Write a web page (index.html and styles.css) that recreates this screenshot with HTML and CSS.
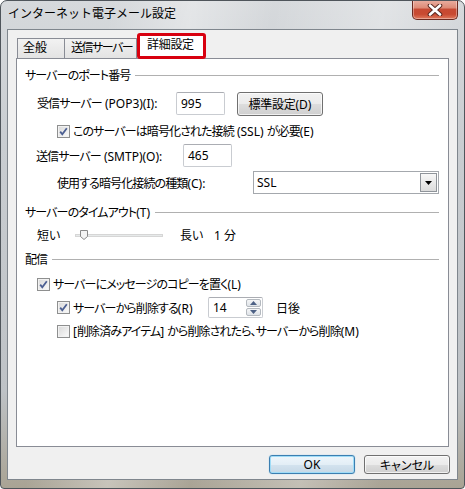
FILE: index.html
```html
<!DOCTYPE html>
<html lang="ja">
<head>
<meta charset="utf-8">
<title>インターネット電子メール設定</title>
<link rel="stylesheet" href="styles.css">
</head>
<body>
<div class="window">
  <div class="titlebar">
    <span class="title">インターネット電子メール設定</span>
    <div class="close">
      <svg width="16" height="12" viewBox="0 0 16 12"><path d="M3 1.5 L13 10.5 M13 1.5 L3 10.5" stroke="#5b2a22" stroke-width="4.6" stroke-linecap="round"/><path d="M3 1.5 L13 10.5 M13 1.5 L3 10.5" stroke="#ffffff" stroke-width="2.6" stroke-linecap="round"/></svg>
    </div>
  </div>
  <div class="client">
    <div class="tabs">
      <div class="tab tab-general">全般</div>
      <div class="tab tab-send">送信サーバー</div>
      <div class="tab tab-active">詳細設定</div>
    </div>
    <div class="panel">
      <div class="group-head head-port"><span>サーバーのポート番号</span><i class="rule"></i></div>
      <div class="row row-pop">
        <span class="lbl lbl-pop">受信サーバー<span class="lat"> (POP3)(I):</span></span>
        <span class="field field-pop">995</span>
        <span class="btn btn-std">標準設定<span class="lat">(D)</span></span>
      </div>
      <div class="row row-ssl">
        <span class="cb"><svg width="11" height="11" viewBox="0 0 11 11"><path d="M2.2 5.6 L4.3 8.3 L8.8 2.2" stroke="#4c5f92" stroke-width="1.8" fill="none"/></svg></span>
        <span class="cb-text">このサーバーは暗号化された接続<span class="lat"> (SSL) </span>が必要<span class="lat">(E)</span></span>
      </div>
      <div class="row row-smtp">
        <span class="lbl lbl-smtp">送信サーバー<span class="lat"> (SMTP)(O):</span></span>
        <span class="field field-smtp">465</span>
      </div>
      <div class="row row-enc">
        <span class="lbl lbl-enc">使用する暗号化接続の種類<span class="lat">(C):</span></span>
        <span class="combo"><span class="combo-val">SSL</span><span class="combo-btn"><svg width="7" height="4" viewBox="0 0 7 4"><path d="M0 0 H7 L3.5 4 Z" fill="#000"/></svg></span></span>
      </div>
      <div class="group-head head-timeout"><span>サーバーのタイムアウト<span class="lat">(T)</span></span><i class="rule"></i></div>
      <div class="row row-slider">
        <span class="s-short">短い</span>
        <span class="track"><svg class="thumb" width="8" height="10" viewBox="0 0 8 10"><path d="M0.5 0.5 H7.5 V6.5 L4 9.5 L0.5 6.5 Z" fill="#f4f4f4" stroke="#8a8a8a"/></svg></span>
        <span class="s-long">長い</span>
        <span class="s-val">1 分</span>
      </div>
      <div class="group-head head-deliver"><span>配信</span><i class="rule"></i></div>
      <div class="row row-copy">
        <span class="cb"><svg width="11" height="11" viewBox="0 0 11 11"><path d="M2.2 5.6 L4.3 8.3 L8.8 2.2" stroke="#4c5f92" stroke-width="1.8" fill="none"/></svg></span>
        <span class="cb-text">サーバーにメッセージのコピーを置く<span class="lat">(L)</span></span>
      </div>
      <div class="row row-del">
        <span class="cb"><svg width="11" height="11" viewBox="0 0 11 11"><path d="M2.2 5.6 L4.3 8.3 L8.8 2.2" stroke="#4c5f92" stroke-width="1.8" fill="none"/></svg></span>
        <span class="cb-text del-text">サーバーから削除する<span class="lat">(R)</span></span>
        <span class="spin"><span class="spin-val">14</span><span class="spin-btns"><span class="spin-b"><svg width="7" height="4" viewBox="0 0 7 4"><path d="M0 4 H7 L3.5 0 Z" fill="#4d6185"/></svg></span><span class="spin-b"><svg width="7" height="4" viewBox="0 0 7 4"><path d="M0 0 H7 L3.5 4 Z" fill="#4d6185"/></svg></span></span></span>
        <span class="days">日後</span>
      </div>
      <div class="row row-deleted">
        <span class="cb"></span>
        <span class="cb-text"><span class="lat">[</span>削除済みアイテム<span class="lat">] </span>から削除されたら、サーバーから削除<span class="lat">(M)</span></span>
      </div>
    </div>
    <div class="buttons">
      <span class="btn btn-ok">OK</span>
      <span class="btn btn-cancel">キャンセル</span>
    </div>
  </div>
</div>
</body>
</html>
```

FILE: styles.css
```css
* { box-sizing: border-box; }
body {
  margin: 0;
  font-family: "Noto Sans", "Noto Sans CJK JP", sans-serif;
  font-size: 12px;
  color: #000;
  font-feature-settings: "palt";
  letter-spacing: -0.9px;
}
.lat { letter-spacing: 0; white-space: pre; }
.window {
  width: 465px;
  height: 489px;
  border: 1px solid #4f555b;
  border-radius: 7px 7px 4px 4px;
  background:
    linear-gradient(100deg, rgba(255,255,255,0) 20%, rgba(255,255,255,0.35) 35%, rgba(255,255,255,0) 50%, rgba(255,255,255,0.3) 70%, rgba(255,255,255,0) 85%),
    linear-gradient(#d6d9dc, #c9cdd1 30%, #bec2c6 80%, #a9a394);
  padding: 0 6px 8px 6px;
  display: flex;
  flex-direction: column;
  overflow: hidden;
}
.titlebar {
  height: 28px;
  display: flex;
  align-items: flex-start;
  padding-left: 1px;
  flex: 0 0 auto;
}
.title {
  margin-top: 5px;
  line-height: 16px;
  font-size: 12px;
  letter-spacing: 0;
  font-feature-settings: normal;
  color: #000;
}
.close {
  margin-left: auto;
  margin-top: -1px;
  width: 46px;
  height: 20px;
  border: 1px solid #6b2a20;
  border-top: none;
  border-radius: 0 0 5px 5px;
  background: linear-gradient(#eab0a2 0%, #de8c78 40%, #c74a33 50%, #c84a31 75%, #e07a5e 100%);
  box-shadow: inset 0 0 0 1px rgba(255,255,255,0.35);
  display: flex;
  align-items: center;
  justify-content: center;
}
.client {
  flex: 1;
  background: #f0f0f0;
  border: 1px solid #7f868d;
  padding: 3px 8px 0 8px;
  display: flex;
  flex-direction: column;
}
.tabs {
  height: 25px;
  display: flex;
  align-items: flex-end;
  margin-left: 1px;
  position: relative;
  z-index: 1;
}
.tab {
  height: 20px;
  border: 1px solid #898c95;
  border-bottom: none;
  background: linear-gradient(#f2f2f2, #e3e3e3);
  line-height: 18px;
  padding-left: 5px;
  white-space: nowrap;
  overflow: hidden;
}
.tab-general { width: 48px; letter-spacing: 0; }
.tab-send { width: 73px; margin-left: -1px; padding-left: 6px; letter-spacing: -1.5px; }
.tab-active {
  width: 69px;
  height: 26px;
  margin-left: 0;
  margin-bottom: -1px;
  border: 3px solid #d8000f;
  border-radius: 3px;
  background: #fff;
  padding-left: 7px;
  line-height: 18px;
  letter-spacing: -0.3px;
}
.panel {
  width: 433px;
  height: 389px;
  background: #fff;
  border: 1px solid #898c95;
  padding: 0 9px 0 8px;
  display: flex;
  flex-direction: column;
}
.group-head {
  height: 18px;
  display: flex;
  align-items: center;
  white-space: nowrap;
}
.group-head .rule {
  flex: 1;
  height: 1px;
  background: #b0b0b0;
  margin-left: 5px;
}
.head-port { margin-top: 7px; }
.head-timeout { margin-top: 9px; }
.head-deliver { margin-top: 6px; }
.row {
  display: flex;
  align-items: center;
  white-space: nowrap;
}
.row-pop { margin-top: 8px; height: 24px; padding-left: 12px; align-items: flex-start; }
.row-pop .lbl { line-height: 23px; }
.lbl-pop { width: 139px; }
.field {
  height: 23px;
  border: 1px solid #c9ccd1;
  border-top-color: #abadb3;
  border-radius: 2px;
  background: #fff;
  line-height: 21px;
  padding-left: 4px;
  letter-spacing: 0;
}
.field-pop { width: 49px; }
.btn {
  display: flex;
  align-items: center;
  justify-content: center;
  border: 1px solid #707070;
  border-radius: 3px;
  background: linear-gradient(#f2f2f2 0%, #ebebeb 50%, #dddddd 51%, #cfcfcf 100%);
  box-shadow: inset 0 0 0 1px rgba(255,255,255,0.7);
  white-space: nowrap;
}
.btn-std { width: 86px; height: 24px; margin-left: 12px; letter-spacing: -0.3px; }
.row-ssl { margin-top: 6px; height: 18px; padding-left: 32px; }
.cb {
  width: 13px;
  height: 13px;
  flex: 0 0 13px;
  border: 1px solid #8e8f8f;
  background: linear-gradient(135deg, #d8d8d8, #fbfbfb);
  box-shadow: inset 0 0 0 1px #f2f2f2;
  display: flex;
  align-items: center;
  justify-content: center;
}
.cb-text { margin-left: 3px; }
.row-smtp { margin-top: 4px; height: 23px; padding-left: 11px; }
.lbl-smtp { width: 147px; }
.field-smtp { width: 49px; }
.row-enc { margin-top: 4px; height: 23px; padding-left: 32px; }
.lbl-enc { width: 196px; }
.combo {
  width: 186px;
  height: 23px;
  border: 1px solid #a4a8ad;
  background: #fff;
  display: flex;
  align-items: center;
  padding: 0 1px 0 3px;
  letter-spacing: 0;
}
.combo-val { flex: 1; }
.combo-btn {
  width: 17px;
  height: 19px;
  border: 1px solid #8f949a;
  background: linear-gradient(#f7f7f7, #dcdcdc);
  display: flex;
  align-items: center;
  justify-content: center;
}
.row-slider { margin-top: 5px; height: 18px; padding-left: 12px; letter-spacing: 0; }
.s-short { width: 38px; }
.track {
  width: 88px;
  height: 3px;
  background: #e7eaea;
  border: 1px solid #d6d6d6;
  position: relative;
}
.thumb { position: absolute; left: 4px; top: -5px; }
.s-long { margin-left: 17px; width: 34px; }
.row-copy { margin-top: 7px; height: 18px; padding-left: 12px; }
.row-del { margin-top: 4px; height: 21px; padding-left: 32px; }
.del-text { width: 135px; }
.spin {
  width: 55px;
  height: 21px;
  border: 1px solid #c9ccd1;
  border-top-color: #abadb3;
  border-radius: 2px;
  display: flex;
  align-items: center;
  padding: 1px 1px 1px 4px;
  letter-spacing: 0;
}
.spin-val { flex: 1; }
.spin-btns { width: 15px; height: 17px; display: flex; flex-direction: column; gap: 1px; }
.spin-b {
  flex: 1;
  border: 1px solid #b4b9bf;
  border-radius: 2px;
  background: linear-gradient(#f5f6f7, #dfe3e8);
  display: flex;
  align-items: center;
  justify-content: center;
}
.days { margin-left: 13px; letter-spacing: 0; }
.row-deleted { margin-top: 4px; height: 18px; padding-left: 32px; }
.buttons {
  margin-top: 8px;
  margin-right: -1px;
  display: flex;
  justify-content: flex-end;
  gap: 9px;
}
.btn-ok, .btn-cancel { width: 86px; height: 19px; letter-spacing: 0; }
.btn-ok {
  border-color: #3c7fb1;
  box-shadow: inset 0 0 0 1px #9fdcf7, 0 0 1px #63b8e6;
  background: linear-gradient(#eef6fb 0%, #e3eef6 50%, #d3e3ef 51%, #c6d8e6 100%);
}
```
